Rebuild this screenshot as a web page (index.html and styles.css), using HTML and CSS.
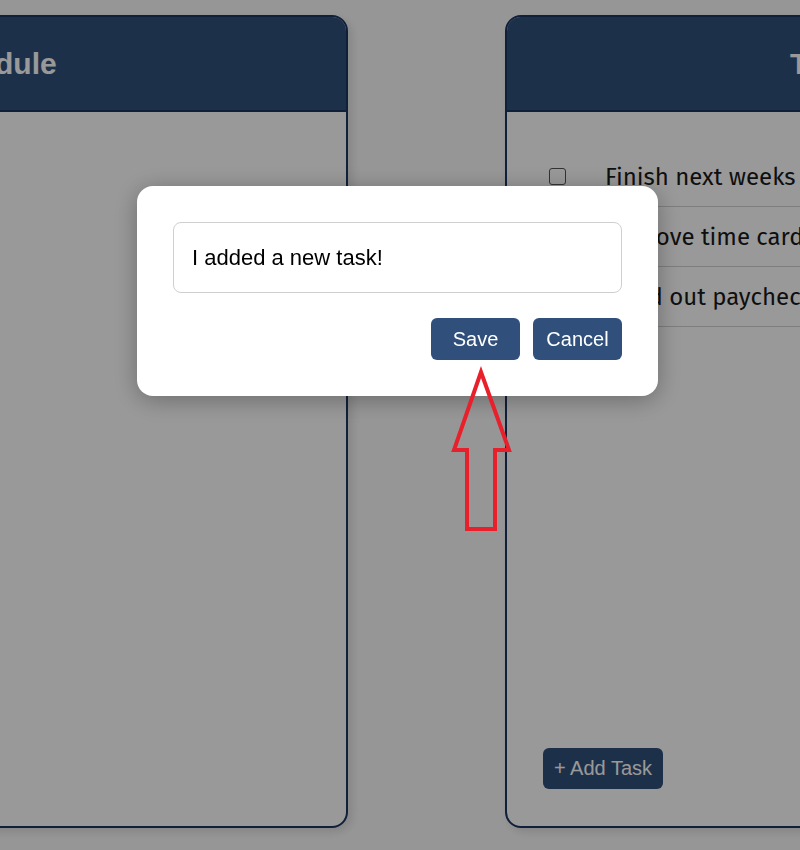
FILE: index.html
```html
<!DOCTYPE html>
<html>
<head>
<meta charset="utf-8">
<link rel="stylesheet" href="styles.css">
</head>
<body>
<div class="board">
  <section class="card">
    <header class="card-head"><h2>Schedule</h2></header>
    <div class="card-body"></div>
  </section>
  <section class="card">
    <header class="card-head"><h2>To-Do List</h2></header>
    <div class="card-body">
      <ul class="tasks">
        <li class="task"><span class="check"></span><span>Finish next weeks schedule</span></li>
        <li class="task"><span class="check"></span><span>Approve time cards</span></li>
        <li class="task"><span class="check"></span><span>Hand out paychecks</span></li>
      </ul>
      <button class="add-btn">+ Add Task</button>
    </div>
  </section>
</div>
<div class="overlay"></div>
<div class="modal">
  <div class="modal-input">I added a new task!</div>
  <div class="modal-actions">
    <button class="btn">Save</button>
    <button class="btn">Cancel</button>
  </div>
</div>
<svg class="arrow" width="800" height="850" viewBox="0 0 800 850">
  <polygon points="481,372 454,450 467,450 467,529 495,529 495,450 509,450" fill="none" stroke="#e8202b" stroke-width="4" stroke-linejoin="miter"/>
</svg>
</body>
</html>
```
FILE: styles.css
```css
html, body {
  margin: 0;
  padding: 0;
  width: 800px;
  height: 850px;
  overflow: hidden;
  background: #fbfbfb;
  font-family: "Liberation Sans", Arial, sans-serif;
}
.board {
  display: flex;
  gap: 157px;
  padding-top: 15px;
  margin-left: -368px;
  width: 1700px;
}
.card {
  flex: 0 0 716px;
  height: 813px;
  box-sizing: border-box;
  border: 2px solid #1b3663;
  border-radius: 16px;
  background: #fff;
  display: flex;
  flex-direction: column;
  overflow: hidden;
  box-shadow: 4px 4px 10px rgba(0,0,0,0.12);
}
.card-head {
  height: 93px;
  background: #31507c;
  border-bottom: 2px solid #1b3663;
  display: flex;
  align-items: center;
  justify-content: center;
}
.card-head h2 {
  margin: 0;
  color: #fff;
  font-size: 30px;
  font-weight: bold;
  font-family: "Liberation Sans", Arial, sans-serif;
}
.card-body {
  flex: 1;
  display: flex;
  flex-direction: column;
  padding: 35px 36px 37px 36px;
}
.tasks {
  list-style: none;
  margin: 0;
  padding: 0;
  flex: 1;
}
.task {
  height: 59px;
  border-bottom: 1px solid #d2d2d2;
  display: flex;
  align-items: center;
  padding-left: 6px;
  font-family: "Fira Sans", "Open Sans", "Noto Sans", sans-serif;
  font-size: 24px;
  color: #1a1a1a;
  white-space: nowrap;
}
.check {
  width: 15px;
  height: 15px;
  border: 1.5px solid #555;
  border-radius: 3px;
  background: #fff;
  margin-right: 39px;
  flex: none;
}
.add-btn {
  align-self: flex-start;
  width: 120px;
  height: 41px;
  border: none;
  border-radius: 6px;
  background: #31507c;
  color: #fff;
  font-family: "Liberation Sans", Arial, sans-serif;
  font-size: 20px;
  padding: 0;
}
.overlay {
  position: fixed;
  inset: 0;
  background: rgba(0,0,0,0.4);
}
.modal {
  position: fixed;
  left: 137px;
  top: 186px;
  width: 521px;
  box-sizing: border-box;
  padding: 36px;
  background: #fff;
  border-radius: 16px;
  box-shadow: 0 4px 24px rgba(0,0,0,0.3);
}
.modal-input {
  height: 71px;
  box-sizing: border-box;
  border: 1px solid #cfcfcf;
  border-radius: 8px;
  display: flex;
  align-items: center;
  padding-left: 18px;
  font-size: 22px;
  color: #000;
}
.modal-actions {
  display: flex;
  justify-content: flex-end;
  gap: 13px;
  margin-top: 25px;
}
.btn {
  width: 89px;
  height: 42px;
  border: none;
  border-radius: 6px;
  background: #30507b;
  color: #fff;
  font-family: "Liberation Sans", Arial, sans-serif;
  font-size: 20px;
  padding: 0;
}
.arrow {
  position: fixed;
  left: 0;
  top: 0;
  pointer-events: none;
}
```
